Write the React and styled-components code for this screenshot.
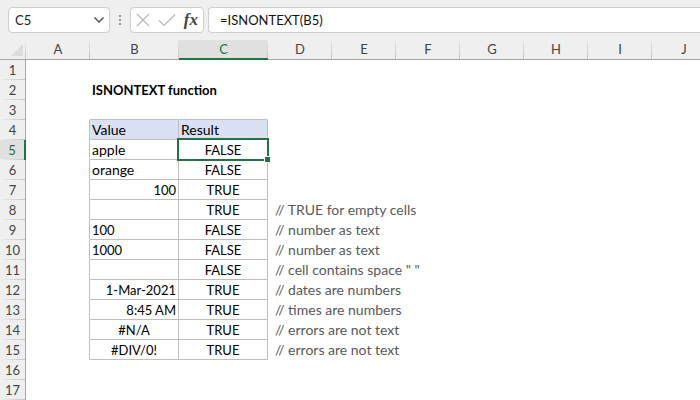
import React from "react";
import styled, { createGlobalStyle } from "styled-components";

const columns = [
  { name: "A", width: 64 },
  { name: "B", width: 89 },
  { name: "C", width: 89 },
  { name: "D", width: 64 },
  { name: "E", width: 64 },
  { name: "F", width: 64 },
  { name: "G", width: 64 },
  { name: "H", width: 64 },
  { name: "I", width: 64 },
  { name: "J", width: 64 }
];

const rows = Array.from({ length: 17 }, (_, i) => i + 1);

const active = { column: "C", row: 5 };

const cells = {
  B2: { text: "ISNONTEXT function", bold: true },
  B4: { text: "Value", label: true },
  C4: { text: "Result", label: true },
  B5: { text: "apple", label: true },
  C5: { text: "FALSE", align: "center" },
  B6: { text: "orange", label: true },
  C6: { text: "FALSE", align: "center" },
  B7: { text: "100", align: "right" },
  C7: { text: "TRUE", align: "center" },
  C8: { text: "TRUE", align: "center" },
  D8: { text: "// TRUE for empty cells", note: true },
  B9: { text: "100" },
  C9: { text: "FALSE", align: "center" },
  D9: { text: "// number as text", note: true },
  B10: { text: "1000" },
  C10: { text: "FALSE", align: "center" },
  D10: { text: "// number as text", note: true },
  C11: { text: "FALSE", align: "center" },
  D11: { text: '// cell contains space " "', note: true },
  B12: { text: "1-Mar-2021", align: "right" },
  C12: { text: "TRUE", align: "center" },
  D12: { text: "// dates are numbers", note: true },
  B13: { text: "8:45 AM", align: "right" },
  C13: { text: "TRUE", align: "center" },
  D13: { text: "// times are numbers", note: true },
  B14: { text: "#N/A", align: "center" },
  C14: { text: "TRUE", align: "center" },
  D14: { text: "// errors are not text", note: true },
  B15: { text: "#DIV/0!", align: "center" },
  C15: { text: "TRUE", align: "center" },
  D15: { text: "// errors are not text", note: true }
};

const inTable = (column, row) =>
  (column === "B" || column === "C") && row >= 4 && row <= 15;

// the cells left of and above the table carry its outer lines
const hasRightLine = (column, row) =>
  inTable(column, row) || (column === "A" && row >= 4 && row <= 15);

const hasBottomLine = (column, row) =>
  inTable(column, row) || ((column === "B" || column === "C") && row === 3);

const FormulaBar = () => (
  <Bar>
    <NameBox>
      <NameInput aria-label="Name box" defaultValue="C5" />
      <IconButton aria-label="Show names" type="button">
        <svg width="12" height="8" viewBox="0 0 12 8">
          <path d="M1.5 1.5 6 6l4.500-4.500" fill="none" stroke="#555" strokeWidth="1.5" />
        </svg>
      </IconButton>
    </NameBox>
    <Grip viewBox="0 0 2 10" aria-hidden="true">
      <path d="M0 0h2v2H0zM0 4h2v2H0zM0 8h2v2H0z" fill="#999" />
    </Grip>
    <Actions>
      <IconButton aria-label="Cancel" type="button">
        <svg width="14" height="14" viewBox="0 0 14 14">
          <path d="M1 1l12 12M13 1 1 13" fill="none" stroke="#b8b8b8" strokeWidth="1.2" />
        </svg>
      </IconButton>
      <IconButton aria-label="Enter" type="button">
        <svg width="18" height="14" viewBox="0 0 18 14">
          <path d="M1 7.500l5 5L17 1.500" fill="none" stroke="#b8b8b8" strokeWidth="1.2" />
        </svg>
      </IconButton>
      <FxButton aria-label="Insert function" type="button">
        fx
      </FxButton>
    </Actions>
    <FormulaInput aria-label="Formula" defaultValue="=ISNONTEXT(B5)" />
  </Bar>
);

const Cell = ({ column, row }) => {
  const cell = cells[column + row] || {};
  const selected = column === active.column && row === active.row;
  return (
    <Td
      $align={cell.align}
      $bold={cell.bold}
      $large={cell.label || cell.note}
      $note={cell.note}
      $filled={inTable(column, row) && row === 4}
      $right={hasRightLine(column, row)}
      $bottom={hasBottomLine(column, row)}
    >
      {cell.text}
      {selected && (
        <Selection>
          <FillHandle />
        </Selection>
      )}
    </Td>
  );
};

const App = () => (
  <Page>
    <GlobalStyle />
    <FormulaBar />
    <Sheet>
      <Grid>
        <colgroup>
          <Column $width={26} />
          {columns.map(c => (
            <Column key={c.name} $width={c.width} />
          ))}
        </colgroup>
        <thead>
          <tr>
            <Corner aria-label="Select all">
              <svg width="12" height="12" viewBox="0 0 12 12">
                <path d="M12 0v12H0z" fill="#dcdcdc" />
              </svg>
            </Corner>
            {columns.map(c => (
              <ColumnHeader
                key={c.name}
                scope="col"
                $active={c.name === active.column}
              >
                {c.name}
              </ColumnHeader>
            ))}
          </tr>
        </thead>
        <tbody>
          {rows.map(row => (
            <tr key={row}>
              <RowHeader scope="row" $active={row === active.row}>
                {row}
              </RowHeader>
              {columns.map(c => (
                <Cell key={c.name} column={c.name} row={row} />
              ))}
            </tr>
          ))}
        </tbody>
      </Grid>
    </Sheet>
  </Page>
);

export default App;

const GlobalStyle = createGlobalStyle`
  * {
    box-sizing: border-box;
  }

  body {
    margin: 0;
    background: #fff;
    color: #000;
    font-family: Lato, "Liberation Sans", sans-serif;
    font-size: 13px;
  }
`;

const Page = styled.div`
  height: 100vh;
  overflow: hidden;
`;

const Bar = styled.div`
  display: flex;
  height: 40px;
  padding: 7px 0;
  background: #efefef;
`;

const Box = styled.div`
  display: flex;
  align-items: center;
  background: #fff;
  border: 1px solid #cfcfcf;
  border-radius: 4px;
`;

const NameBox = styled(Box)`
  width: 102px;
  margin-left: 8px;
  padding: 0 4px 0 6px;
`;

const NameInput = styled.input`
  flex: 1;
  min-width: 0;
  padding: 0;
  border: 0;
  outline: 0;
  background: none;
  color: #222;
  font: inherit;
`;

const IconButton = styled.button`
  display: flex;
  align-items: center;
  padding: 0;
  border: 0;
  background: none;
`;

const Grip = styled.svg`
  width: 2px;
  height: 10px;
  margin: 8px 9px;
`;

const Actions = styled(Box)`
  width: 74px;
  justify-content: space-between;
  padding: 0 5px;
`;

const FxButton = styled(IconButton)`
  color: #444;
  font: italic bold 17px/20px "Liberation Serif", serif;
`;

const FormulaInput = styled.input`
  flex: 1;
  min-width: 0;
  margin-left: 4px;
  padding: 0 11px;
  background: #fff;
  border: 1px solid #cfcfcf;
  border-right: 0;
  border-radius: 4px 0 0 4px;
  outline: 0;
  color: #111;
  font: inherit;
`;

const Sheet = styled.div`
  overflow: hidden;
`;

const Grid = styled.table`
  width: 0;
  min-width: 100%;
  table-layout: fixed;
  border-collapse: separate;
  border-spacing: 0;
`;

const Column = styled.col`
  width: ${p => p.$width}px;
`;

const HeaderCell = styled.th`
  height: 20px;
  padding: 0;
  background: #efefef;
  color: #444;
  font-weight: 400;
  line-height: 19px;
  text-align: center;
`;

const Corner = styled(HeaderCell)`
  padding: 0 3px 0 0;
  border-bottom: 1px solid #a6a6a6;
  background: linear-gradient(transparent, #c4c4c4) right / 1px 100% no-repeat #efefef;
  text-align: right;

  svg {
    display: block;
    margin-left: auto;
  }
`;

const ColumnHeader = styled(HeaderCell)`
  border-bottom: 1px solid #a6a6a6;
  background: linear-gradient(#e6e6e6, #c4c4c4) right / 1px 100% no-repeat #efefef;
  ${p =>
    p.$active &&
    `
      padding-top: 1px;
      border-bottom: 2px solid #217346;
      background-color: #e0e0e0;
      color: #217346;
      line-height: 17px;
    `}
`;

const RowHeader = styled(HeaderCell)`
  border-right: 1px solid #a6a6a6;
  background: linear-gradient(90deg, #efefef, #c4c4c4) bottom / 100% 1px no-repeat #efefef;
  ${p =>
    p.$active &&
    `
      border-right: 2px solid #217346;
      background-color: #e0e0e0;
      color: #217346;
    `}
`;

const Td = styled.td`
  position: relative;
  height: 20px;
  padding: ${p => (p.$large ? "0 2px" : "1px 2px 0")};
  font-size: ${p => (p.$large ? 14 : 13)}px;
  line-height: ${p => (p.$large ? 19 : 18)}px;
  text-align: ${p => p.$align || "left"};
  white-space: nowrap;
  border-right: 1px solid ${p => (p.$right ? "#bfbfbf" : "transparent")};
  border-bottom: 1px solid ${p => (p.$bottom ? "#bfbfbf" : "transparent")};
  ${p => p.$filled && `background: #d9e1f2;`}
  ${p => p.$bold && `font-weight: 700;`}
  ${p => p.$note && `color: #595959; padding-left: 7px;`}
`;

// outline drawn over the grid lines around the active cell
const Selection = styled.div`
  position: absolute;
  z-index: 1;
  inset: -2px;
  border: 2px solid #217346;
`;

const FillHandle = styled.div`
  position: absolute;
  right: -4px;
  bottom: -4px;
  width: 7px;
  height: 7px;
  border: 1px solid #fff;
  background: #217346;
`;
